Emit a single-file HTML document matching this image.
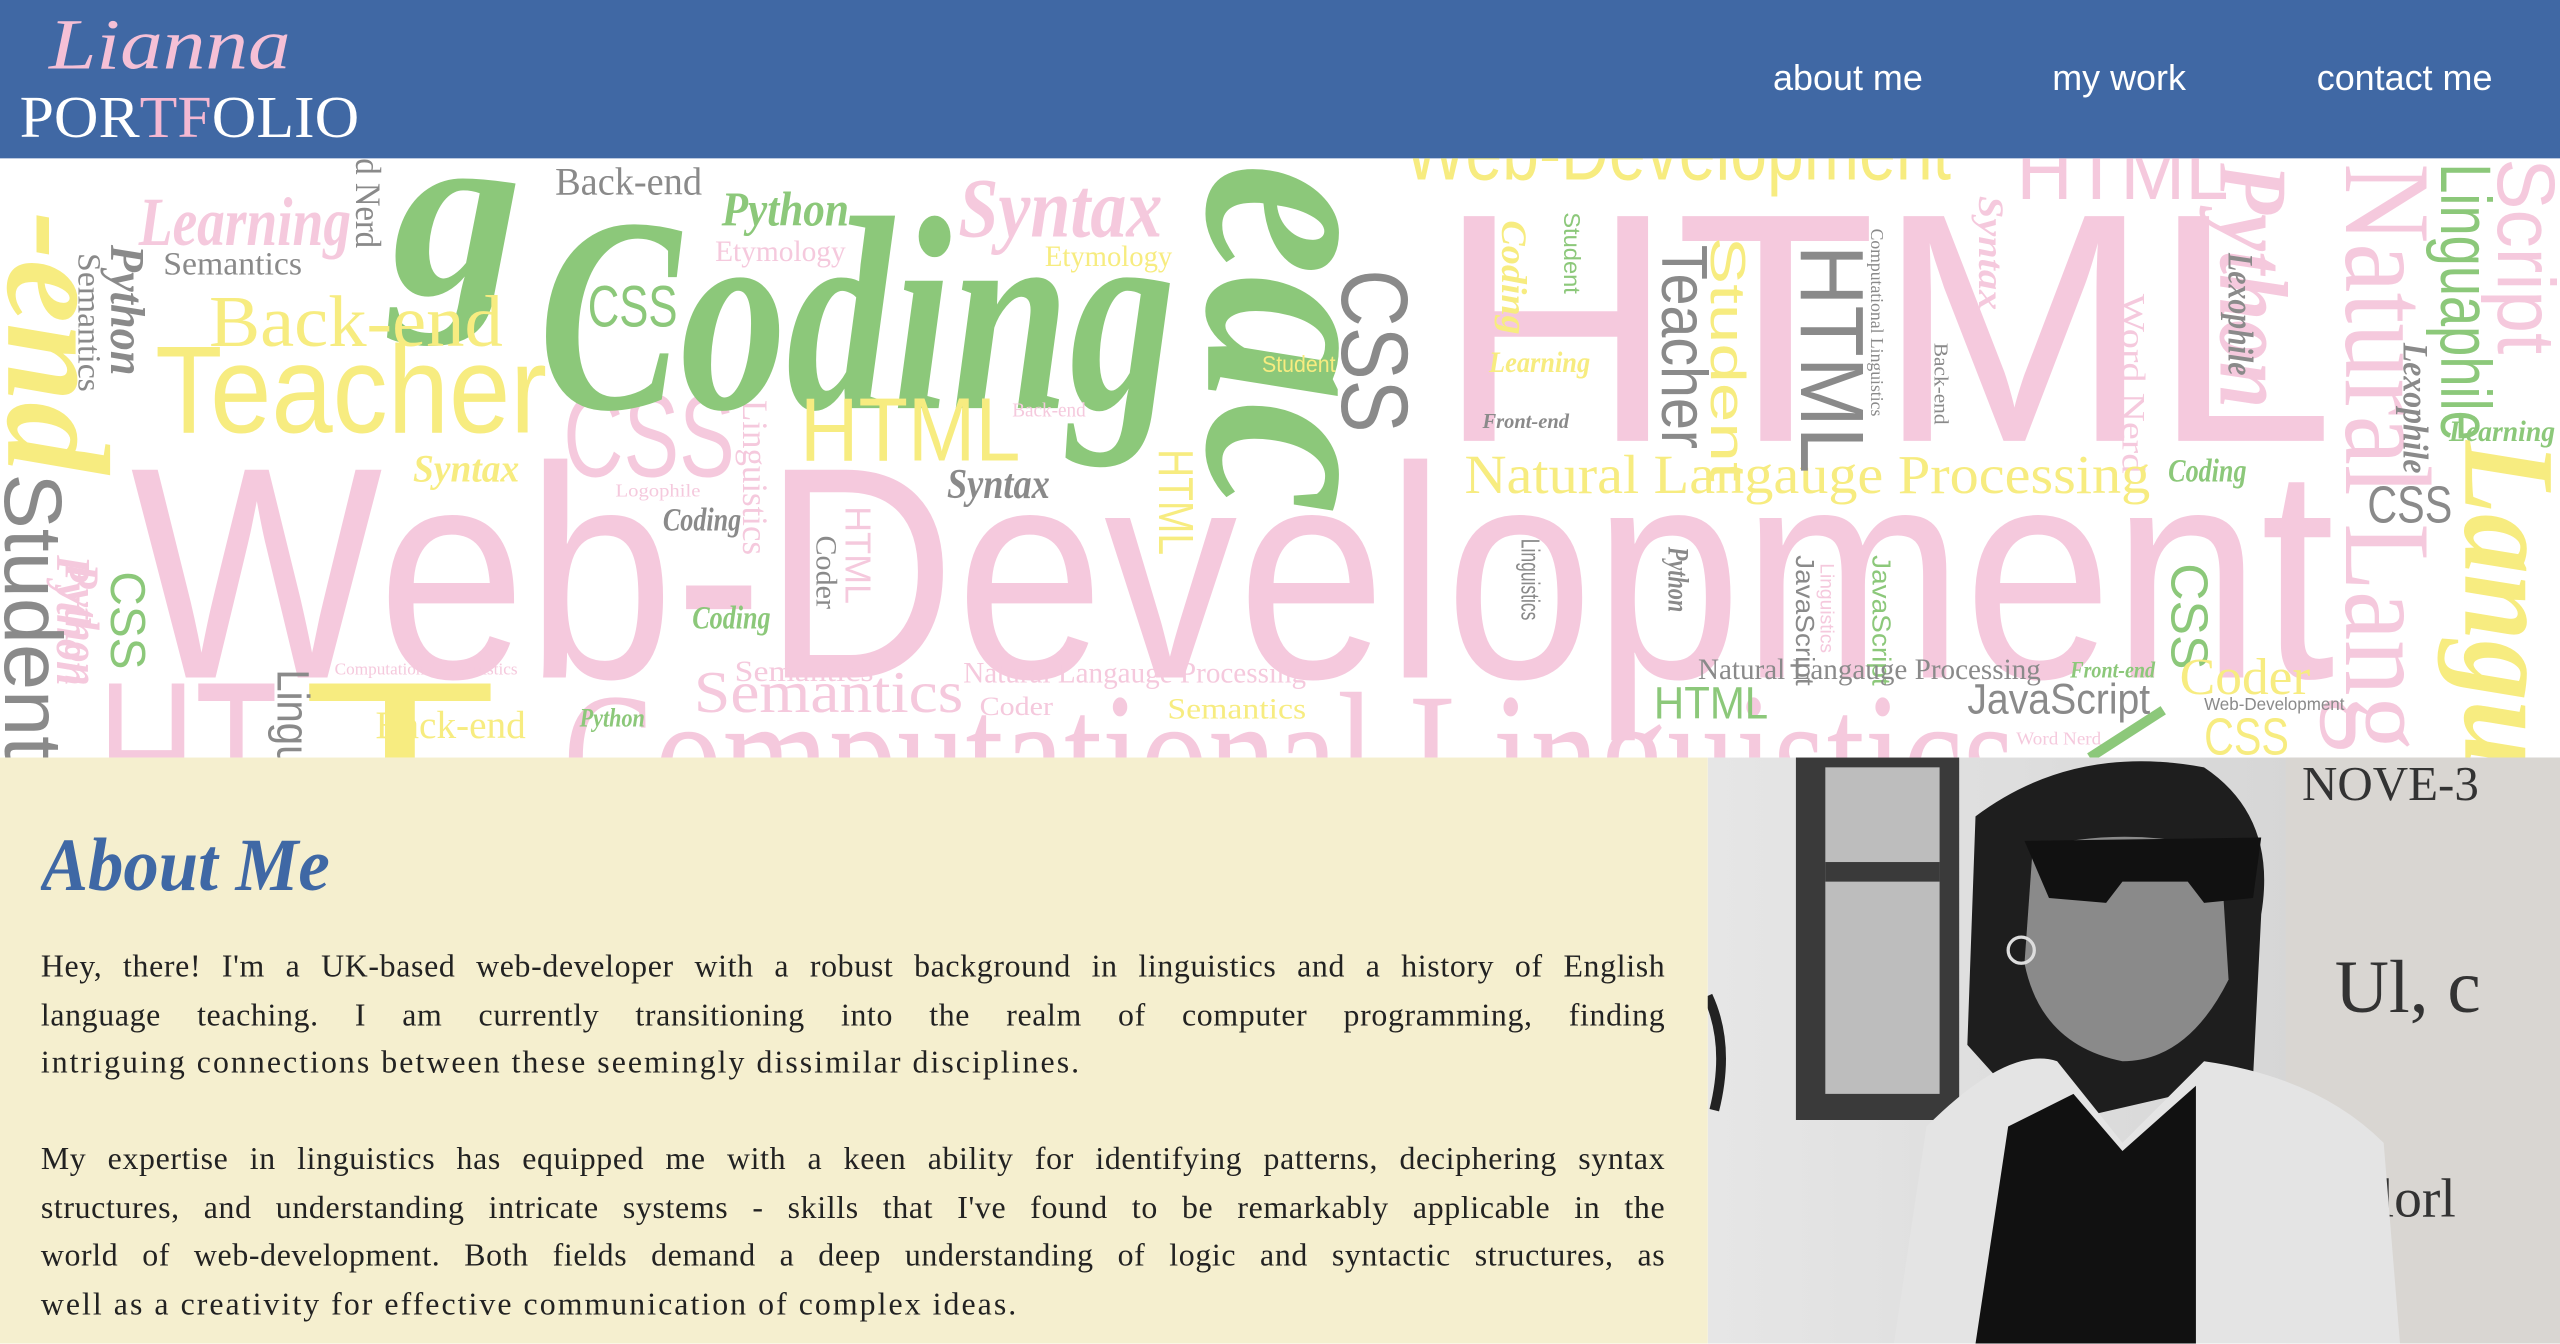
<!DOCTYPE html>
<html><head><meta charset="utf-8"><style>
html,body{margin:0;padding:0;width:2560px;height:1344px;overflow:hidden;background:#fff}
#w{position:absolute;left:0;top:0;width:1568px;height:823px;transform:scale(1.632653);transform-origin:0 0;overflow:hidden}
#hdr{position:absolute;left:0;top:0;width:1568px;height:97px;background:#4068a4}
.nav{position:absolute;top:35px;font:22px "Liberation Sans",sans-serif;color:#fff}
#cloud{position:absolute;left:0;top:97px}
#about{position:absolute;left:0;top:464px;width:1046px;height:359px;background:#f5efcf}
.pp{position:absolute;left:25px;width:995px;margin:0;font:19.5px/29.5px "Liberation Serif",serif;color:#222}
.pp div{text-align:justify;text-align-last:justify;white-space:nowrap;height:29.5px;letter-spacing:0.4px}
.pp div.l{text-align-last:left;letter-spacing:1.25px}
#photo{position:absolute;left:1046px;top:464px}
</style></head><body><div id="w">
<div id="hdr">
<svg width="260" height="97" style="position:absolute;left:0;top:0">
<text x="30" y="42" font-family="Liberation Serif" font-style="italic" font-size="44" fill="#f5c0d6" textLength="148" lengthAdjust="spacingAndGlyphs">Lianna</text>
<text x="12" y="84" font-family="Liberation Serif" font-size="36" fill="#fff" textLength="208" lengthAdjust="spacingAndGlyphs">POR<tspan fill="#f5b8d2">TF</tspan>OLIO</text>
</svg>
<div class="nav" style="left:1086px">about me</div>
<div class="nav" style="left:1257px">my work</div>
<div class="nav" style="left:1419px">contact me</div>
</div>
<svg id="cloud" width="1568" height="367" viewBox="0 97 1568 367" font-family="Liberation Sans">
<rect x="0" y="97" width="1568" height="367" fill="#fff"/>
<g fill="#f5c9dd">
<text x="60" y="515" font-size="140" textLength="110" lengthAdjust="spacingAndGlyphs">HT</text>
<text x="80" y="415" font-size="185" textLength="1350" lengthAdjust="spacingAndGlyphs">Web-Development</text>
<text x="880" y="270" font-size="200" textLength="550" lengthAdjust="spacingAndGlyphs">HTML</text>
<text x="345" y="292" font-size="72" textLength="105" lengthAdjust="spacingAndGlyphs">CSS</text>
<text x="345" y="500" font-size="110" font-family="Liberation Serif" textLength="890" lengthAdjust="spacingAndGlyphs">Computational Linguistics</text>
<text x="425" y="436" font-size="36" font-family="Liberation Serif" textLength="165" lengthAdjust="spacingAndGlyphs">Semantics</text>
<text x="450" y="417" font-size="18" font-family="Liberation Serif" textLength="85" lengthAdjust="spacingAndGlyphs">Semantics</text>
<text x="590" y="418" font-size="18" font-family="Liberation Serif" textLength="210" lengthAdjust="spacingAndGlyphs">Natural Langauge Processing</text>
<text x="600" y="438" font-size="16" font-family="Liberation Serif" textLength="45" lengthAdjust="spacingAndGlyphs">Coder</text>
<text x="587" y="145" font-size="52" font-family="Liberation Serif" font-style="italic" font-weight="bold" textLength="125" lengthAdjust="spacingAndGlyphs">Syntax</text>
<text x="85" y="150" font-size="42" font-family="Liberation Serif" font-style="italic" font-weight="bold" textLength="130" lengthAdjust="spacingAndGlyphs">Learning</text>
<text x="438" y="160" font-size="18" font-family="Liberation Serif" textLength="80" lengthAdjust="spacingAndGlyphs">Etymology</text>
<text x="1235" y="122" font-size="50" textLength="130" lengthAdjust="spacingAndGlyphs">HTML</text>
<text x="1437" y="100" font-size="75" font-family="Liberation Serif" transform="rotate(90 1437 100)" textLength="360" lengthAdjust="spacingAndGlyphs">Natural Lang</text>
<text x="1530" y="97" font-size="50" transform="rotate(90 1530 97)" textLength="120" lengthAdjust="spacingAndGlyphs">Script</text>
<text x="1360" y="100" font-size="60" font-family="Liberation Serif" font-style="italic" font-weight="bold" transform="rotate(90 1360 100)" textLength="150" lengthAdjust="spacingAndGlyphs">Python</text>
<text x="1300" y="180" font-size="20" font-family="Liberation Serif" transform="rotate(90 1300 180)" textLength="110" lengthAdjust="spacingAndGlyphs">Word Nerd</text>
<text x="455" y="245" font-size="22" font-family="Liberation Serif" transform="rotate(90 455 245)" textLength="95" lengthAdjust="spacingAndGlyphs">Linguistics</text>
<text x="35" y="340" font-size="30" font-family="Liberation Serif" font-style="italic" font-weight="bold" transform="rotate(90 35 340)" textLength="80" lengthAdjust="spacingAndGlyphs">Python</text>
<text x="1212" y="120" font-size="22" font-family="Liberation Serif" font-style="italic" font-weight="bold" transform="rotate(90 1212 120)" textLength="70" lengthAdjust="spacingAndGlyphs">Syntax</text>
</g>
<g fill="#8cc87a">
<text x="330" y="250" font-size="170" font-family="Liberation Serif" font-style="italic" font-weight="bold" textLength="390" lengthAdjust="spacingAndGlyphs">Coding</text>
<text x="740" y="100" font-size="170" font-family="Liberation Serif" font-style="italic" font-weight="bold" transform="rotate(90 740 100)" textLength="215" lengthAdjust="spacingAndGlyphs">eac</text>
<text x="240" y="180" font-size="150" font-family="Liberation Serif" font-style="italic" font-weight="bold" textLength="80" lengthAdjust="spacingAndGlyphs">g</text>
<text x="360" y="200" font-size="36" textLength="55" lengthAdjust="spacingAndGlyphs">CSS</text>
<text x="442" y="138" font-size="30" font-family="Liberation Serif" font-style="italic" font-weight="bold" textLength="78" lengthAdjust="spacingAndGlyphs">Python</text>
<text x="1013" y="440" font-size="28" textLength="70" lengthAdjust="spacingAndGlyphs">HTML</text>
<text x="1495" y="100" font-size="44" transform="rotate(90 1495 100)" textLength="170" lengthAdjust="spacingAndGlyphs">Linguaphile</text>
<text x="1330" y="345" font-size="32" transform="rotate(90 1330 345)" textLength="65" lengthAdjust="spacingAndGlyphs">CSS</text>
<text x="1328" y="295" font-size="20" font-family="Liberation Serif" font-style="italic" font-weight="bold" textLength="48" lengthAdjust="spacingAndGlyphs">Coding</text>
<text x="1500" y="270" font-size="18" font-family="Liberation Serif" font-style="italic" font-weight="bold" textLength="65" lengthAdjust="spacingAndGlyphs">Learning</text>
<text x="424" y="385" font-size="20" font-family="Liberation Serif" font-style="italic" font-weight="bold" textLength="48" lengthAdjust="spacingAndGlyphs">Coding</text>
<text x="68" y="350" font-size="30" transform="rotate(90 68 350)" textLength="60" lengthAdjust="spacingAndGlyphs">CSS</text>
<text x="355" y="445" font-size="16" font-family="Liberation Serif" font-style="italic" font-weight="bold" textLength="40" lengthAdjust="spacingAndGlyphs">Python</text>
<text x="1268" y="415" font-size="14" font-family="Liberation Serif" font-style="italic" font-weight="bold" textLength="52" lengthAdjust="spacingAndGlyphs">Front-end</text>
<text x="1147" y="340" font-size="16" transform="rotate(90 1147 340)" textLength="80" lengthAdjust="spacingAndGlyphs">JavaScript</text>
<text x="958" y="130" font-size="14" transform="rotate(90 958 130)" textLength="50" lengthAdjust="spacingAndGlyphs">Student</text>
<path d="M1280 464 L1325 435" stroke="#8cc87a" stroke-width="6"/>
</g>
<g fill="#f7ec80">
<text x="95" y="265" font-size="76" textLength="240" lengthAdjust="spacingAndGlyphs">Teacher</text>
<text x="128" y="212" font-size="45" font-family="Liberation Serif" textLength="180" lengthAdjust="spacingAndGlyphs">Back-end</text>
<text x="490" y="282" font-size="55" textLength="135" lengthAdjust="spacingAndGlyphs">HTML</text>
<text x="897" y="302" font-size="34" font-family="Liberation Serif" textLength="420" lengthAdjust="spacingAndGlyphs">Natural Langauge Processing</text>
<text x="860" y="110" font-size="50" textLength="335" lengthAdjust="spacingAndGlyphs">Web-Development</text>
<text x="1335" y="425" font-size="32" font-family="Liberation Serif" textLength="80" lengthAdjust="spacingAndGlyphs">Coder</text>
<text x="185" y="515" font-size="140" textLength="120" lengthAdjust="spacingAndGlyphs">T</text>
<text x="230" y="452" font-size="24" font-family="Liberation Serif" textLength="92" lengthAdjust="spacingAndGlyphs">Back-end</text>
<text x="715" y="440" font-size="18" font-family="Liberation Serif" textLength="85" lengthAdjust="spacingAndGlyphs">Semantics</text>
<text x="1350" y="462" font-size="32" textLength="52" lengthAdjust="spacingAndGlyphs">CSS</text>
<text x="253" y="295" font-size="24" font-family="Liberation Serif" font-style="italic" font-weight="bold" textLength="65" lengthAdjust="spacingAndGlyphs">Syntax</text>
<text x="912" y="228" font-size="18" font-family="Liberation Serif" font-style="italic" font-weight="bold" textLength="62" lengthAdjust="spacingAndGlyphs">Learning</text>
<text x="640" y="163" font-size="18" font-family="Liberation Serif" textLength="78" lengthAdjust="spacingAndGlyphs">Etymology</text>
<text x="773" y="228" font-size="14" textLength="45" lengthAdjust="spacingAndGlyphs">Student</text>
<text x="1048" y="145" font-size="30" transform="rotate(90 1048 145)" textLength="150" lengthAdjust="spacingAndGlyphs">Student</text>
<text x="710" y="275" font-size="30" transform="rotate(90 710 275)" textLength="65" lengthAdjust="spacingAndGlyphs">HTML</text>
<text x="5" y="130" font-size="90" font-family="Liberation Serif" font-style="italic" font-weight="bold" transform="rotate(90 5 130)" textLength="160" lengthAdjust="spacingAndGlyphs">-end</text>
<text x="1510" y="270" font-size="80" font-family="Liberation Serif" font-style="italic" font-weight="bold" transform="rotate(90 1510 270)" textLength="200" lengthAdjust="spacingAndGlyphs">Langu</text>
<text x="920" y="135" font-size="22" font-family="Liberation Serif" font-style="italic" font-weight="bold" transform="rotate(90 920 135)" textLength="70" lengthAdjust="spacingAndGlyphs">Coding</text>
</g>
<g fill="#8a8a8a">
<text x="340" y="119" font-size="24" font-family="Liberation Serif" textLength="90" lengthAdjust="spacingAndGlyphs">Back-end</text>
<text x="100" y="168" font-size="20" font-family="Liberation Serif" textLength="85" lengthAdjust="spacingAndGlyphs">Semantics</text>
<text x="1040" y="416" font-size="18" font-family="Liberation Serif" textLength="210" lengthAdjust="spacingAndGlyphs">Natural Langauge Processing</text>
<text x="1205" y="437" font-size="26" textLength="112" lengthAdjust="spacingAndGlyphs">JavaScript</text>
<text x="1450" y="320" font-size="32" textLength="52" lengthAdjust="spacingAndGlyphs">CSS</text>
<text x="1350" y="435" font-size="11" textLength="86" lengthAdjust="spacingAndGlyphs">Web-Development</text>
<text x="580" y="305" font-size="26" font-family="Liberation Serif" font-style="italic" font-weight="bold" textLength="63" lengthAdjust="spacingAndGlyphs">Syntax</text>
<text x="406" y="325" font-size="20" font-family="Liberation Serif" font-style="italic" font-weight="bold" textLength="48" lengthAdjust="spacingAndGlyphs">Coding</text>
<text x="822" y="165" font-size="58" transform="rotate(90 822 165)" textLength="100" lengthAdjust="spacingAndGlyphs">CSS</text>
<text x="1103" y="150" font-size="55" transform="rotate(90 1103 150)" textLength="140" lengthAdjust="spacingAndGlyphs">HTML</text>
<text x="1018" y="150" font-size="40" transform="rotate(90 1018 150)" textLength="125" lengthAdjust="spacingAndGlyphs">Teacher</text>
<text x="3" y="290" font-size="50" transform="rotate(90 3 290)" textLength="175" lengthAdjust="spacingAndGlyphs">Student</text>
<text x="48" y="155" font-size="20" font-family="Liberation Serif" transform="rotate(90 48 155)" textLength="85" lengthAdjust="spacingAndGlyphs">Semantics</text>
<text x="68" y="150" font-size="30" font-family="Liberation Serif" font-style="italic" font-weight="bold" transform="rotate(90 68 150)" textLength="80" lengthAdjust="spacingAndGlyphs">Python</text>
<text x="1365" y="155" font-size="22" font-family="Liberation Serif" font-style="italic" font-weight="bold" transform="rotate(90 1365 155)" textLength="75" lengthAdjust="spacingAndGlyphs">Lexophile</text>
<text x="1472" y="210" font-size="22" font-family="Liberation Serif" font-style="italic" font-weight="bold" transform="rotate(90 1472 210)" textLength="80" lengthAdjust="spacingAndGlyphs">Lexophile</text>
<text x="1100" y="340" font-size="16" transform="rotate(90 1100 340)" textLength="80" lengthAdjust="spacingAndGlyphs">JavaScript</text>
<text x="932" y="330" font-size="16" transform="rotate(90 932 330)" textLength="50" lengthAdjust="spacingAndGlyphs">Linguistics</text>
<text x="1022" y="335" font-size="18" font-family="Liberation Serif" font-style="italic" font-weight="bold" transform="rotate(90 1022 335)" textLength="40" lengthAdjust="spacingAndGlyphs">Python</text>
<text x="908" y="262" font-size="13" font-family="Liberation Serif" font-style="italic" font-weight="bold" textLength="53" lengthAdjust="spacingAndGlyphs">Front-end</text>
<text x="170" y="410" font-size="28" transform="rotate(90 170 410)" textLength="60" lengthAdjust="spacingAndGlyphs">Lingu</text>
<text x="500" y="328" font-size="18" font-family="Liberation Serif" transform="rotate(90 500 328)" textLength="45" lengthAdjust="spacingAndGlyphs">Coder</text>
<text x="1146" y="140" font-size="11" font-family="Liberation Serif" transform="rotate(90 1146 140)" textLength="115" lengthAdjust="spacingAndGlyphs">Computational Linguistics</text>
<text x="1185" y="210" font-size="12" font-family="Liberation Serif" transform="rotate(90 1185 210)" textLength="50" lengthAdjust="spacingAndGlyphs">Back-end</text>
<text x="218" y="97" font-size="22" font-family="Liberation Serif" transform="rotate(90 218 97)" textLength="55" lengthAdjust="spacingAndGlyphs">d Nerd</text>
</g>
<g fill="#f5c9dd">
<text x="518" y="310" font-size="22" transform="rotate(90 518 310)" textLength="60" lengthAdjust="spacingAndGlyphs">HTML</text>
<text x="40" y="345" font-size="30" font-family="Liberation Serif" font-style="italic" font-weight="bold" transform="rotate(90 40 345)" textLength="75" lengthAdjust="spacingAndGlyphs">Python</text>
<text x="205" y="413" font-size="10" font-family="Liberation Serif" textLength="112" lengthAdjust="spacingAndGlyphs">Computational Linguistics</text>
<text x="377" y="304" font-size="11" font-family="Liberation Serif" textLength="52" lengthAdjust="spacingAndGlyphs">Logophile</text>
<text x="620" y="255" font-size="12" font-family="Liberation Serif" textLength="45" lengthAdjust="spacingAndGlyphs">Back-end</text>
<text x="1235" y="456" font-size="11" font-family="Liberation Serif" textLength="52" lengthAdjust="spacingAndGlyphs">Word Nerd</text>
<text x="1115" y="345" font-size="12" transform="rotate(90 1115 345)" textLength="55" lengthAdjust="spacingAndGlyphs">Linguistics</text>
</g>
</svg>
<div id="about"></div>
<svg style="position:absolute;left:25px;top:500px" width="220" height="60">
<text x="0" y="45" font-family="Liberation Serif" font-style="italic" font-weight="bold" font-size="46" fill="#3f68a5" textLength="177" lengthAdjust="spacingAndGlyphs">About Me</text>
</svg>
<div class="pp" style="top:578px">
<div>Hey, there! I'm a UK-based web-developer with a robust background in linguistics and a history of English</div>
<div>language teaching. I am currently transitioning into the realm of computer programming, finding</div>
<div class="l">intriguing connections between these seemingly dissimilar disciplines.</div>
</div>
<div class="pp" style="top:696px">
<div>My expertise in linguistics has equipped me with a keen ability for identifying patterns, deciphering syntax</div>
<div>structures, and understanding intricate systems - skills that I've found to be remarkably applicable in the</div>
<div>world of web-development. Both fields demand a deep understanding of logic and syntactic structures, as</div>
<div class="l">well as a creativity for effective communication of complex ideas.</div>
</div>
<svg id="photo" width="522" height="359" viewBox="1046 464 522 359">
<defs><linearGradient id="bg" x1="0" x2="1"><stop offset="0" stop-color="#e6e6e6"/><stop offset="1" stop-color="#cfcfcf"/></linearGradient></defs>
<rect x="1046" y="464" width="522" height="359" fill="url(#bg)"/>
<rect x="1100" y="464" width="100" height="222" fill="#3a3a3a"/>
<rect x="1118" y="470" width="70" height="200" fill="#bdbdbd"/>
<rect x="1118" y="528" width="70" height="12" fill="#3a3a3a"/>
<rect x="1400" y="464" width="168" height="359" fill="#d9d6d2"/>
<text x="1410" y="490" font-size="30" font-family="Liberation Serif" fill="#333">NOVE-3</text>
<text x="1430" y="620" font-size="46" font-family="Liberation Serif" fill="#333">Ul, c</text>
<text x="1440" y="745" font-size="34" font-family="Liberation Serif" fill="#333">olorl</text>
<path d="M1210 500 Q1270 455 1350 470 Q1395 500 1385 560 L1380 660 L1250 690 L1205 640 Z" fill="#1e1e1e"/>
<path d="M1245 520 Q1300 505 1360 520 L1365 600 Q1340 650 1300 650 Q1250 640 1240 590 Z" fill="#8a8a8a"/>
<path d="M1240 515 L1385 513 L1380 550 L1350 553 L1340 540 L1300 540 L1290 553 L1255 550 Z" fill="#111"/>
<path d="M1160 823 L1180 690 Q1230 640 1260 650 L1300 700 L1350 650 Q1420 660 1460 700 L1470 823 Z" fill="#e4e4e4"/>
<path d="M1210 823 L1230 690 L1270 670 L1300 705 L1345 665 L1345 823 Z" fill="#111"/>
<circle cx="1238" cy="582" r="8" fill="none" stroke="#ddd" stroke-width="2"/>
<path d="M1046 610 Q1060 640 1050 680" stroke="#222" stroke-width="6" fill="none"/>
</svg>
</div></body></html>
